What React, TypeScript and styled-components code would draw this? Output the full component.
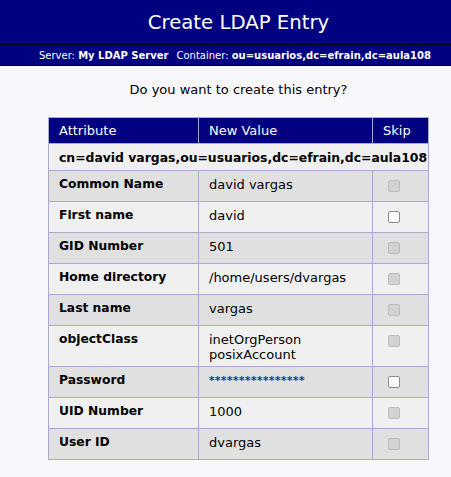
import React from "react";
import styled, { createGlobalStyle } from "styled-components";

const Global = createGlobalStyle`
  html, body { margin: 0; padding: 0; background: #f8f8fc; }
  body { font-family: "DejaVu Sans", Verdana, sans-serif; color: #000; }
`;

const Page = styled.div`
  padding-left: 26px;
  background: #f8f8fc;
  min-height: 477px;
`;

const Banner = styled.div`
  margin-left: -26px;
  background: #000080;
  color: #fff;
`;

const TitleBar = styled.div`
  height: 44px;
  display: flex;
  align-items: center;
  justify-content: center;
  padding-left: 26px;
  font-size: 19.7px;
  border-bottom: 1px solid #000;
`;

const InfoBar = styled.div`
  height: 20px;
  display: flex;
  align-items: center;
  justify-content: flex-end;
  padding-right: 20px;
  font-size: 10px;
  white-space: nowrap;
  border-bottom: 1px solid #000;
  gap: 8px;
  b { font-weight: bold; }
`;

const Question = styled.p`
  margin: 16px 0 0;
  text-align: center;
  font-size: 13px;
  line-height: 16px;
`;

const Table = styled.table`
  margin: 19px auto 0;
  width: 381px;
  table-layout: fixed;
  border-collapse: collapse;
  border: 1px solid #aaaad0;
  font-size: 13px;
`;

const Col = styled.col<{ $w: number }>`
  width: ${(p) => p.$w}px;
`;

const Th = styled.th`
  background: #000080;
  color: #fff;
  font-weight: normal;
  text-align: left;
  padding: 4px 10px 5px;
  height: 16px;
  border: 1px solid #aaaad0;
`;

const DnCell = styled.td`
  background: #f0f0f0;
  font-weight: bold;
  font-size: 12.4px;
  padding: 5px 0 5px 10px;
  height: 16px;
  white-space: nowrap;
  overflow: visible;
  border: 1px solid #aaaad0;
`;

const Row = styled.tr<{ $alt: boolean }>`
  background: ${(p) => (p.$alt ? "#f0f0f0" : "#e0e0e0")};
`;

const Td = styled.td<{ $bold?: boolean }>`
  vertical-align: top;
  padding: 6px 10px 4px;
  line-height: 15px;
  font-weight: ${(p) => (p.$bold ? "bold" : "normal")};
  font-size: ${(p) => (p.$bold ? "12.3px" : "13px")};
  border: 1px solid #aaaad0;
`;

const SkipTd = styled.td`
  vertical-align: top;
  padding: 9px 0 9px 15px;
  border: 1px solid #aaaad0;
`;

const Box = styled.input`
  appearance: none;
  display: block;
  margin: 0;
  width: 12px;
  height: 12px;
  border-radius: 2px;
  border: 1px solid ${(p) => (p.disabled ? "#bdbdbd" : "#8a8a8a")};
  background: ${(p) => (p.disabled ? "#d2d2d2" : "#fff")};
`;

const Stars = styled.span`
  display: inline-block;
  color: #1e2a50;
  font-size: 11px;
  letter-spacing: 0.5px;
  text-shadow: 0 0 1px #4a9ad8, 0 0 1px #4a9ad8;
  transform: translateY(-1px);
`;

type R = { name: string; value: React.ReactNode; enabled?: boolean };

const rows: R[] = [
  { name: "Common Name", value: "david vargas" },
  { name: "First name", value: "david", enabled: true },
  { name: "GID Number", value: "501" },
  { name: "Home directory", value: "/home/users/dvargas" },
  { name: "Last name", value: "vargas" },
  { name: "objectClass", value: <>inetOrgPerson<br />posixAccount</> },
  { name: "Password", value: <Stars>****************</Stars>, enabled: true },
  { name: "UID Number", value: "1000" },
  { name: "User ID", value: "dvargas" },
];

export default function App() {
  return (
    <>
      <Global />
      <Page>
        <Banner>
          <TitleBar>Create LDAP Entry</TitleBar>
          <InfoBar>
            <span>Server: <b>My LDAP Server</b></span>
            <span>Container: <b>ou=usuarios,dc=efrain,dc=aula108</b></span>
          </InfoBar>
        </Banner>
        <Question>Do you want to create this entry?</Question>
        <Table>
          <colgroup>
            <Col $w={150} />
            <Col $w={174} />
            <Col $w={56} />
          </colgroup>
          <thead>
            <tr>
              <Th>Attribute</Th>
              <Th>New Value</Th>
              <Th>Skip</Th>
            </tr>
          </thead>
          <tbody>
            <tr>
              <DnCell colSpan={3}>cn=david vargas,ou=usuarios,dc=efrain,dc=aula108</DnCell>
            </tr>
            {rows.map((r, i) => (
              <Row key={r.name} $alt={i % 2 === 1}>
                <Td $bold>{r.name}</Td>
                <Td>{r.value}</Td>
                <SkipTd>
                  <Box type="checkbox" disabled={!r.enabled} readOnly />
                </SkipTd>
              </Row>
            ))}
          </tbody>
        </Table>
      </Page>
    </>
  );
}
